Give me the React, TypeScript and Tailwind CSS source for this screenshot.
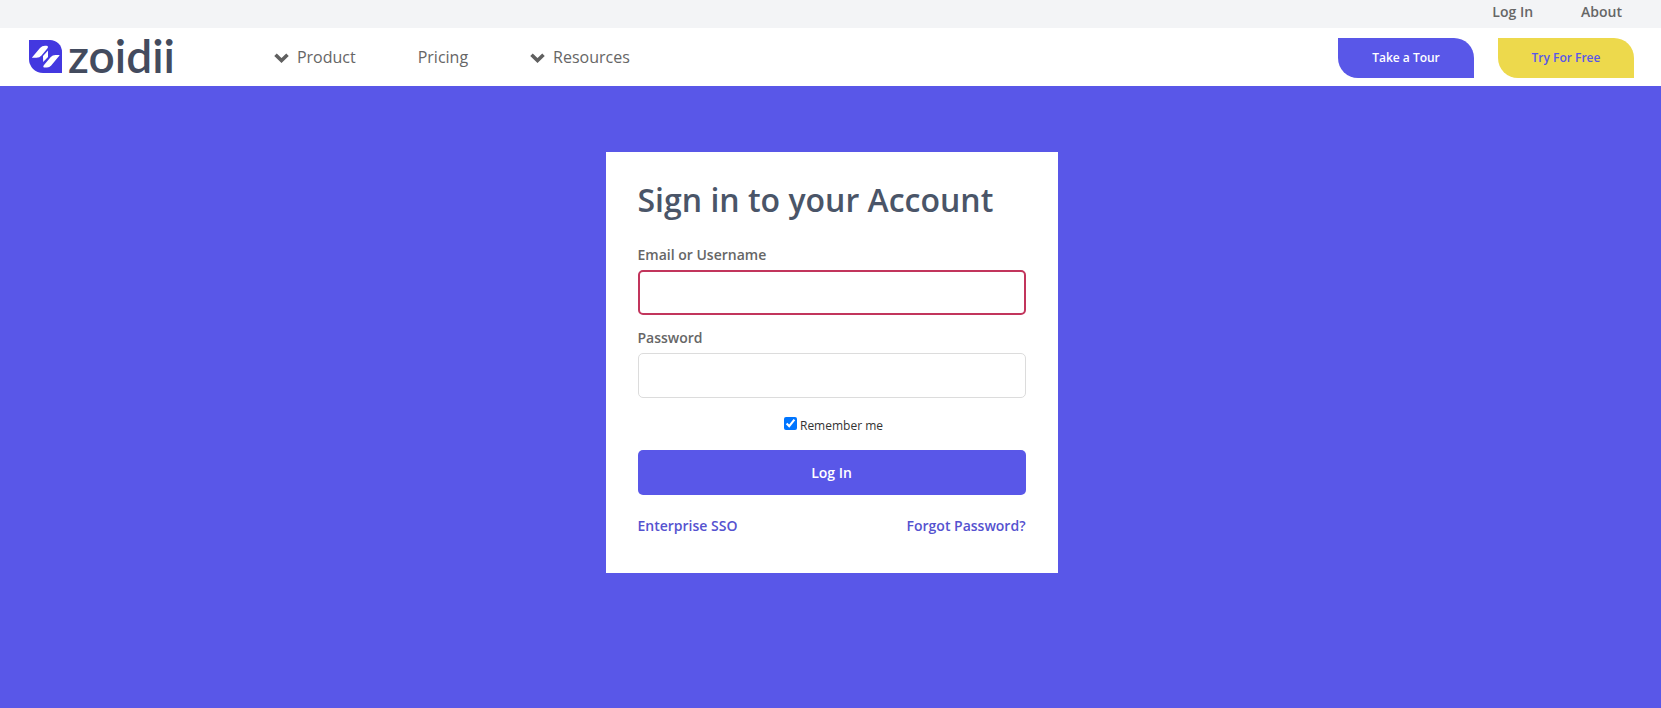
import { useState, type FormEvent } from 'react';

const NAV = [
  { label: 'Product', menu: true },
  { label: 'Pricing', menu: false },
  { label: 'Resources', menu: true },
];

export default function App() {
  return (
    <div className="flex min-h-screen flex-col bg-[#5957e8] font-['Open_Sans',sans-serif] text-[#666]">
      <div className="flex h-7 items-center justify-end gap-12 bg-[#f3f4f6] pr-[39px] pb-1 text-sm font-semibold">
        <a href="#login">Log In</a>
        <a href="#about">About</a>
      </div>
      <Header />
      <main className="flex flex-1 items-start justify-center pt-[66px] pr-4 pb-16 pl-[18px]">
        <SignInForm />
      </main>
    </div>
  );
}

function Header() {
  return (
    <header className="flex h-[58px] items-center justify-between bg-white pr-[27px] pl-[29px]">
      <div className="flex items-center gap-[99px]">
        <a href="#home" className="flex items-center gap-1.5 pb-0.5">
          <LogoMark />
          <span className="font-[Lato,sans-serif] text-[46px] leading-[52px] font-semibold text-[#434b5e]">zoidii</span>
        </a>
        <nav className="flex items-center gap-[62px] text-base">
          {NAV.map(item => (
            <a key={item.label} href={`#${item.label.toLowerCase()}`} className="flex items-center gap-2">
              {item.menu && <Chevron />}
              {item.label}
            </a>
          ))}
        </nav>
      </div>
      <div className="flex gap-6 pt-0.5 text-xs font-semibold">
        <button className="h-10 w-[136px] rounded-tr-[20px] rounded-bl-[20px] bg-[#5957e8] text-white">Take a Tour</button>
        <button className="h-10 w-[136px] rounded-tr-[20px] rounded-bl-[20px] bg-[#edd94c] text-[#5957e8]">Try For Free</button>
      </div>
    </header>
  );
}

function SignInForm() {
  const [remember, setRemember] = useState(true);

  function onSubmit(e: FormEvent) { e.preventDefault(); }

  return (
    <form onSubmit={onSubmit} className="w-full max-w-[452px] bg-white px-8 pt-7 pb-[37px]">
      <h1 className="text-[32px] leading-10 font-semibold text-[#4a5568]">Sign in to your Account</h1>

      <label htmlFor="email" className="mt-[25px] block text-sm font-semibold">Email or Username</label>
      <input id="email" type="text" className="mt-[5px] block h-[45px] w-full rounded-[5px] border-2 border-[#c2355c] px-3 text-sm outline-none" />

      <label htmlFor="password" className="mt-[13px] block text-sm font-semibold">Password</label>
      <input id="password" type="password" className="mt-[5px] block h-[45px] w-full rounded-[5px] border border-[#dcdcdc] px-3 text-sm outline-none" />

      <div className="mt-4 flex h-5 items-start justify-center gap-[3px] pl-1">
        <input id="remember" type="checkbox" checked={remember} onChange={e => setRemember(e.target.checked)} className="mt-[3px] size-[13px]" />
        <label htmlFor="remember" className="pt-1 text-xs text-[#333]">Remember me</label>
      </div>

      <button type="submit" className="mt-4 block h-[45px] w-full rounded-[5px] bg-[#5957e8] text-sm font-semibold text-white">Log In</button>

      <div className="mt-[21px] flex justify-between text-sm font-semibold text-[#5552cf]">
        <a href="#sso">Enterprise SSO</a>
        <a href="#forgot">Forgot Password?</a>
      </div>
    </form>
  );
}

function LogoMark() {
  return (
    <svg width="33" height="33" viewBox="0 0 33 33" aria-hidden="true">
      <path d="M0 0H21A12 12 0 0 1 33 12V33H14A14 14 0 0 1 0 19Z" fill="#4338e0" />
      <g fill="#fff">
        <path d="M3 17.500 11 8Q13 5.700 16 5.700H17.500Q20 6.200 18.300 8.500L12.500 15.500Q10.500 17.800 7.500 17.800H4Q2.500 17.800 3 17.500Z" />
        <path d="M15.200 27.500H18Q20.500 27.500 22.200 25.400L30.500 15.500Q31 14.900 30 14.900H26.500Q23.500 14.900 21.800 17L15 25Q13.500 27 15.200 27.500Z" />
        <path d="M14 16 19 10.500V17L14.200 22Z" />
      </g>
    </svg>
  );
}

function Chevron() {
  return (
    <svg width="15" height="11" viewBox="0 0 15 11" fill="none" aria-hidden="true">
      <path d="M1.500 2.700 7.500 8.500 13.500 2.700" stroke="#606060" strokeWidth="3.600" />
    </svg>
  );
}
